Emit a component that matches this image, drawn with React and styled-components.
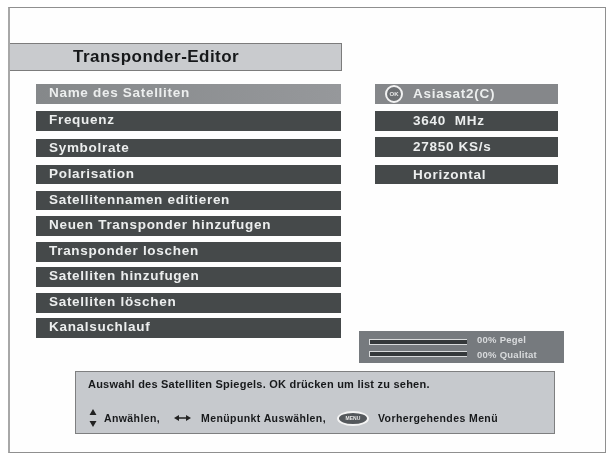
import React from "react";
import styled, { createGlobalStyle } from "styled-components";

const Global = createGlobalStyle`
  html, body { margin: 0; padding: 0; background: #fff; }
  #root { width: 607px; height: 454px; overflow: hidden; }
`;

const Frame = styled.div`
  box-sizing: border-box;
  width: 598px;
  height: 446px;
  margin: 7px 0 0 8px;
  border: 1px solid #8f8f8f;
  border-left: 2px solid #a8a8a8;
  background: #fefefe;
  font-family: "Liberation Sans", Arial, sans-serif;
  font-weight: 700;
  filter: blur(0.55px);
  display: flex;
  flex-direction: column;
`;

const Header = styled.div`
  box-sizing: border-box;
  width: 332px;
  height: 28px;
  margin-top: 35px;
  padding-left: 63px;
  background: #c9cbce;
  border: 1px solid #7c7c7c;
  border-left: 0;
  font-size: 17px;
  line-height: 26px;
  letter-spacing: 0.47px;
  color: #16181a;
`;

const Body = styled.div`
  display: flex;
  margin-top: 13px;
  margin-left: 26px;
`;

const LeftColumn = styled.div`
  width: 305px;
  display: flex;
  flex-direction: column;
`;

const RightColumn = styled.div`
  width: 205px;
  margin-left: 18px;
  display: flex;
  flex-direction: column;
  align-items: flex-start;
`;

const MenuRow = styled.div`
  box-sizing: border-box;
  height: ${(p) => p.$h || 20}px;
  margin-top: ${(p) => p.$gap}px;
  padding-left: 13px;
  background: ${(p) => (p.$active ? "linear-gradient(90deg, #85888a, #96989b)" : "#45494a")};
  color: #eceeee;
  font-size: 13.5px;
  line-height: 18px;
  letter-spacing: 0.7px;
  white-space: nowrap;
`;

const ValueRow = styled.div`
  box-sizing: border-box;
  width: 183px;
  height: ${(p) => p.$h || 20}px;
  margin-top: ${(p) => p.$gap}px;
  margin-left: 16px;
  padding-left: 38px;
  background: ${(p) => (p.$active ? "#85878a" : "#45494a")};
  color: #eceeee;
  font-size: 13.5px;
  line-height: 20px;
  letter-spacing: 0.72px;
  white-space: pre;
  position: relative;
`;

const OkBadge = styled.span`
  position: absolute;
  left: 10px;
  top: 1px;
  box-sizing: border-box;
  width: 18px;
  height: 18px;
  border: 2px solid #f2f2f2;
  border-radius: 50%;
  background: #6d7073;
  color: #e8e8e8;
  font-size: 6px;
  line-height: 14px;
  letter-spacing: 0;
  text-align: center;
`;

const SignalPanel = styled.div`
  box-sizing: border-box;
  width: 205px;
  height: 32px;
  margin-top: 147px;
  padding: 1px 10px 0;
  background: #767a7e;
  display: grid;
  grid-template-columns: 98px auto;
  grid-template-rows: 15px 15px;
  column-gap: 10px;
  align-items: center;
`;

const Bar = styled.div`
  box-sizing: border-box;
  height: 6px;
  border: 1px solid #d8dadb;
  border-width: 1px 0 1px 1px;
  background: #34383a;
  align-self: ${(p) => (p.$first ? "end" : "start")};
  margin: ${(p) => (p.$first ? "0 0 2px" : "4px 0 0")};
`;

const SignalLabel = styled.div`
  color: #d9dbdd;
  font-size: 9.5px;
  line-height: 14px;
  letter-spacing: 0.25px;
  white-space: nowrap;
`;

const Help = styled.div`
  box-sizing: border-box;
  width: 480px;
  height: 63px;
  margin: 8px 0 0 65px;
  padding: 5px 0 0 12px;
  background: #c6c9cd;
  border: 1px solid #7e7f80;
  color: #17191b;
  display: flex;
  flex-direction: column;
`;

const HelpLine = styled.div`
  font-size: 11px;
  line-height: 14px;
  letter-spacing: 0.23px;
  white-space: nowrap;
`;

const KeyRow = styled.div`
  display: flex;
  align-items: center;
  margin-top: 15px;
  height: 24px;
  font-size: 10.5px;
  letter-spacing: 0.4px;
  white-space: nowrap;
`;

const KeyLabel = styled.span`
  margin-left: ${(p) => p.$left}px;
`;

const MenuOval = styled.span`
  box-sizing: border-box;
  width: 32px;
  height: 15px;
  margin-left: 11px;
  border: 2px solid #f4f4f4;
  border-radius: 50%;
  background: #54585c;
  color: #e8e8e8;
  font-size: 5px;
  line-height: 11px;
  letter-spacing: 0;
  text-align: center;
`;

const IconSvg = styled.svg`
  display: block;
  flex: none;
  margin-left: ${(p) => p.$left || 0}px;
`;

const UpDown = () => (
  <IconSvg width="8" height="20" viewBox="0 0 8 20" $left={1}>
    <path d="M4 1 L7.5 7 H0.5 Z M4 19 L7.5 13 H0.5 Z" fill="#222" />
  </IconSvg>
);

const LeftRight = () => (
  <IconSvg width="17" height="8" viewBox="0 0 17 8" $left={14}>
    <path d="M0 4 L5 1 V3.2 H12 V1 L17 4 L12 7 V4.8 H5 V7 Z" fill="#222" />
  </IconSvg>
);

const menu = [
  ["Name des Satelliten", 0, 20, true],
  ["Frequenz", 7, 20],
  ["Symbolrate", 8, 18],
  ["Polarisation", 8, 19],
  ["Satellitennamen editieren", 7, 19],
  ["Neuen Transponder hinzufugen", 6, 20],
  ["Transponder loschen", 6, 20],
  ["Satelliten hinzufugen", 5, 20],
  ["Satelliten löschen", 6, 20],
  ["Kanalsuchlauf", 5, 20],
];

const values = [
  ["Asiasat2(C)", 0, 20, true],
  ["3640  MHz", 7, 20],
  ["27850 KS/s", 6, 20],
  ["Horizontal", 8, 19],
];

export default function App() {
  return (
    <>
      <Global />
      <Frame>
        <Header>Transponder-Editor</Header>
        <Body>
          <LeftColumn>
            {menu.map(([label, gap, h, active]) => (
              <MenuRow key={label} $gap={gap} $h={h} $active={active}>
                {label}
              </MenuRow>
            ))}
          </LeftColumn>
          <RightColumn>
            {values.map(([label, gap, h, active]) => (
              <ValueRow key={label} $gap={gap} $h={h} $active={active}>
                {active && <OkBadge>OK</OkBadge>}
                {label}
              </ValueRow>
            ))}
            <SignalPanel>
              <Bar $first />
              <SignalLabel>00% Pegel</SignalLabel>
              <Bar />
              <SignalLabel>00% Qualitat</SignalLabel>
            </SignalPanel>
          </RightColumn>
        </Body>
        <Help>
          <HelpLine>Auswahl des Satelliten Spiegels. OK drücken um list zu sehen.</HelpLine>
          <KeyRow>
            <UpDown />
            <KeyLabel $left={7}>Anwählen,</KeyLabel>
            <LeftRight />
            <KeyLabel $left={10}>Menüpunkt Auswählen,</KeyLabel>
            <MenuOval>MENU</MenuOval>
            <KeyLabel $left={9}>Vorhergehendes Menü</KeyLabel>
          </KeyRow>
        </Help>
      </Frame>
    </>
  );
}
